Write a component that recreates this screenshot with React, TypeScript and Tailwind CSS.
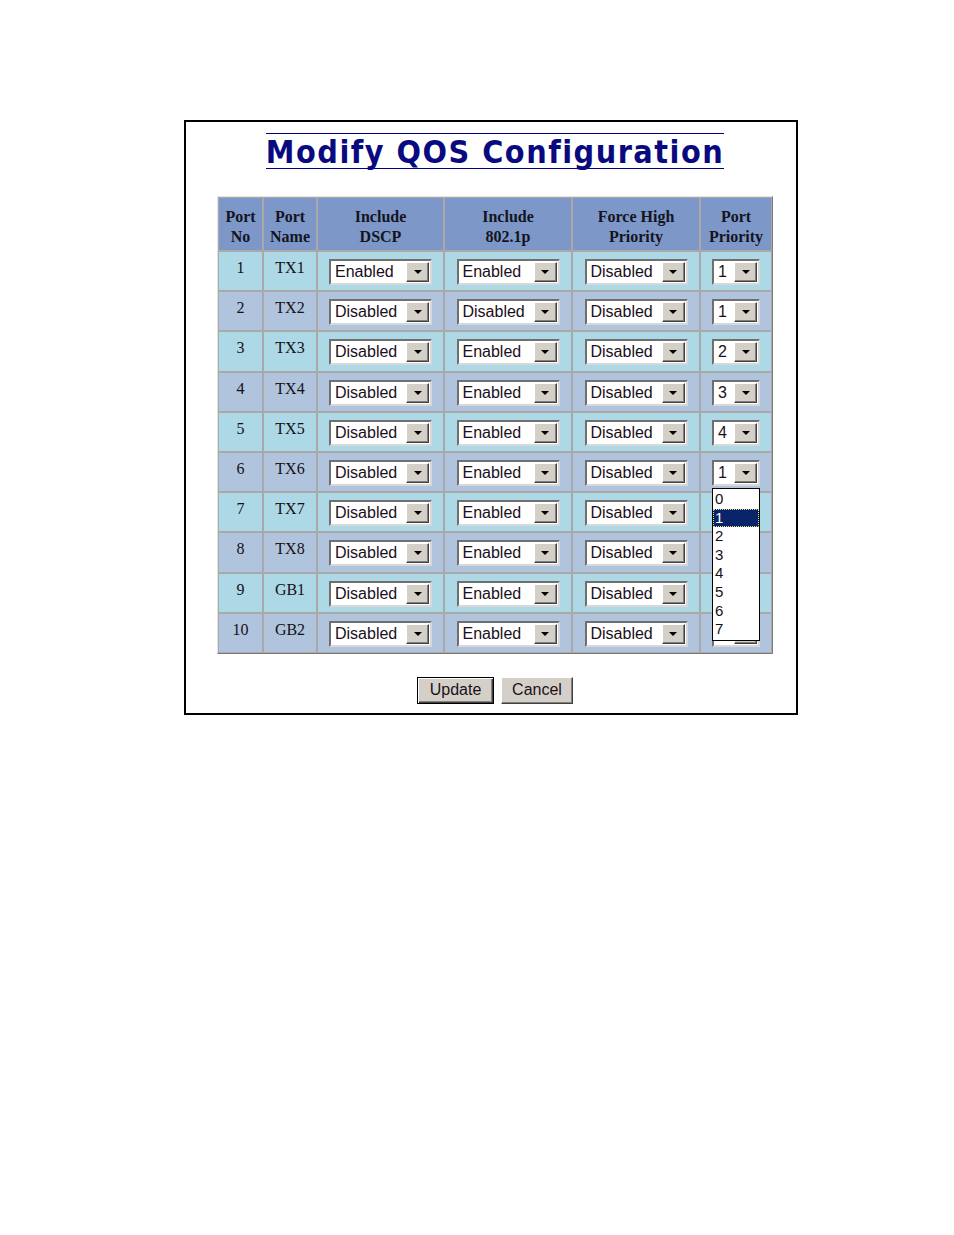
import React from "react";

type Row = {
  no: number;
  name: string;
  dscp: string;
  p8021: string;
  force: string;
  prio: string;
};

// rows 7-10 priority values sit under the open list, so they show nothing
const rows: Row[] = [
  { no: 1, name: "TX1", dscp: "Enabled", p8021: "Enabled", force: "Disabled", prio: "1" },
  { no: 2, name: "TX2", dscp: "Disabled", p8021: "Disabled", force: "Disabled", prio: "1" },
  { no: 3, name: "TX3", dscp: "Disabled", p8021: "Enabled", force: "Disabled", prio: "2" },
  { no: 4, name: "TX4", dscp: "Disabled", p8021: "Enabled", force: "Disabled", prio: "3" },
  { no: 5, name: "TX5", dscp: "Disabled", p8021: "Enabled", force: "Disabled", prio: "4" },
  { no: 6, name: "TX6", dscp: "Disabled", p8021: "Enabled", force: "Disabled", prio: "1" },
  { no: 7, name: "TX7", dscp: "Disabled", p8021: "Enabled", force: "Disabled", prio: "" },
  { no: 8, name: "TX8", dscp: "Disabled", p8021: "Enabled", force: "Disabled", prio: "" },
  { no: 9, name: "GB1", dscp: "Disabled", p8021: "Enabled", force: "Disabled", prio: "" },
  { no: 10, name: "GB2", dscp: "Disabled", p8021: "Enabled", force: "Disabled", prio: "" },
];

const headers = [
  ["Port", "No"],
  ["Port", "Name"],
  ["Include", "DSCP"],
  ["Include", "802.1p"],
  ["Force High", "Priority"],
  ["Port", "Priority"],
];

const sans = '"Liberation Sans", Arial, sans-serif';

function Arrow() {
  return (
    <svg width="8" height="4" viewBox="0 0 8 4">
      <path d="M0 0 H8 L4 4 Z" fill="#000" />
    </svg>
  );
}

function FakeSelect({ value, wide }: { value: string; wide: boolean }) {
  return (
    <div
      className={`flex h-[26px] items-center border-2 border-t-[#6f6f6f] border-l-[#6f6f6f] border-b-[#d8d8d8] border-r-[#d8d8d8] bg-white ${
        wide ? "w-[103px]" : "w-[48px]"
      }`}
      style={{ fontFamily: sans }}
    >
      <span className="flex-1 overflow-hidden whitespace-nowrap pl-[4px] text-[16px] leading-[20px] text-[#1a101a]">
        {value}
      </span>
      <span className="mr-[1px] flex h-[20px] w-[23px] items-center justify-center border border-t-white border-l-white border-b-[#404040] border-r-[#404040] bg-[#d4d0c8] shadow-[inset_-1px_-1px_0_#808080]">
        <Arrow />
      </span>
    </div>
  );
}

function Cell({ children, bg }: { children: React.ReactNode; bg: string }) {
  return (
    <div className={`${bg} flex justify-center pt-[6px] text-[16px] leading-[20px] text-[#141014]`}>
      {children}
    </div>
  );
}

function SelCell({ bg, children }: { bg: string; children: React.ReactNode }) {
  return <div className={`${bg} flex items-center justify-center pt-[2px]`}>{children}</div>;
}

export default function App() {
  return (
    <div className="min-h-[1235px] bg-white pt-[120px] pl-[184px]">
      <div
        className="w-[614px] border-2 border-black pt-[11px] pb-[9px] pl-[8px]"
        style={{ fontFamily: sans }}
      >
        <div className="flex justify-center">
          <h1
            className="inline-block border-y border-[#000080] pt-[3px] text-[32px] font-bold leading-[31px] tracking-[1.5px] text-[#0a0a80]"
            style={{ fontFamily: '"DejaVu Sans Condensed", "DejaVu Sans", Tahoma, sans-serif', fontStretch: "condensed" }}
          >
            Modify QOS Configuration
          </h1>
        </div>

        <div className="mt-[27px] flex justify-center">
          <div className="relative border border-t-[#e4e4e4] border-l-[#e4e4e4] border-b-[#7a7a7a] border-r-[#7a7a7a] bg-[#a9a9a9] p-[1px]">
            <div
              className="grid gap-[2px] grid-cols-[43px_52px_125px_126px_126px_70px] grid-rows-[52px_repeat(10,38.2px)]"
              style={{ fontFamily: '"Liberation Serif", "Times New Roman", serif' }}
            >
              {headers.map((h, i) => (
                <div
                  key={i}
                  className="flex flex-col items-center bg-[#7d98c8] pt-[9px] text-center text-[16px] font-bold leading-[20px] text-[#14141e]"
                >
                  <span>{h[0]}</span>
                  <span>{h[1]}</span>
                </div>
              ))}
              {rows.map((r, i) => {
                const bg = i % 2 === 0 ? "bg-[#add8e6]" : "bg-[#b0c4de]";
                return (
                  <React.Fragment key={r.no}>
                    <Cell bg={bg}>{r.no}</Cell>
                    <Cell bg={bg}>{r.name}</Cell>
                    <SelCell bg={bg}>
                      <FakeSelect value={r.dscp} wide />
                    </SelCell>
                    <SelCell bg={bg}>
                      <FakeSelect value={r.p8021} wide />
                    </SelCell>
                    <SelCell bg={bg}>
                      <FakeSelect value={r.force} wide />
                    </SelCell>
                    <SelCell bg={bg}>
                      <FakeSelect value={r.prio} wide={false} />
                    </SelCell>
                  </React.Fragment>
                );
              })}
            </div>

            {/* open port priority list for row 6 */}
            <div className="absolute left-[494px] top-[291px] w-[48px] border border-black bg-white py-[1px] text-[15px] leading-[18.6px] text-[#141014]">
              {["0", "1", "2", "3", "4", "5", "6", "7"].map((o) => (
                <div
                  key={o}
                  className={
                    o === "1"
                      ? "h-[18.6px] bg-[#0a246a] pl-[2px] text-white outline-1 outline-dotted outline-[#e0e080] -outline-offset-1"
                      : "h-[18.6px] pl-[2px]"
                  }
                >
                  {o}
                </div>
              ))}
            </div>
          </div>
        </div>

        <div className="mt-[23px] flex justify-center gap-[7px]">
          <button className="h-[27px] w-[77px] border border-black bg-[#d4d0c8] text-[16px] text-[#1a101a] shadow-[inset_1px_1px_0_#fff,inset_-1px_-1px_0_#404040,inset_-2px_-2px_0_#808080]">
            Update
          </button>
          <button className="h-[27px] w-[72px] border border-t-white border-l-white border-b-[#404040] border-r-[#404040] bg-[#d4d0c8] text-[16px] text-[#1a101a] shadow-[inset_-1px_-1px_0_#808080]">
            Cancel
          </button>
        </div>
      </div>
    </div>
  );
}
